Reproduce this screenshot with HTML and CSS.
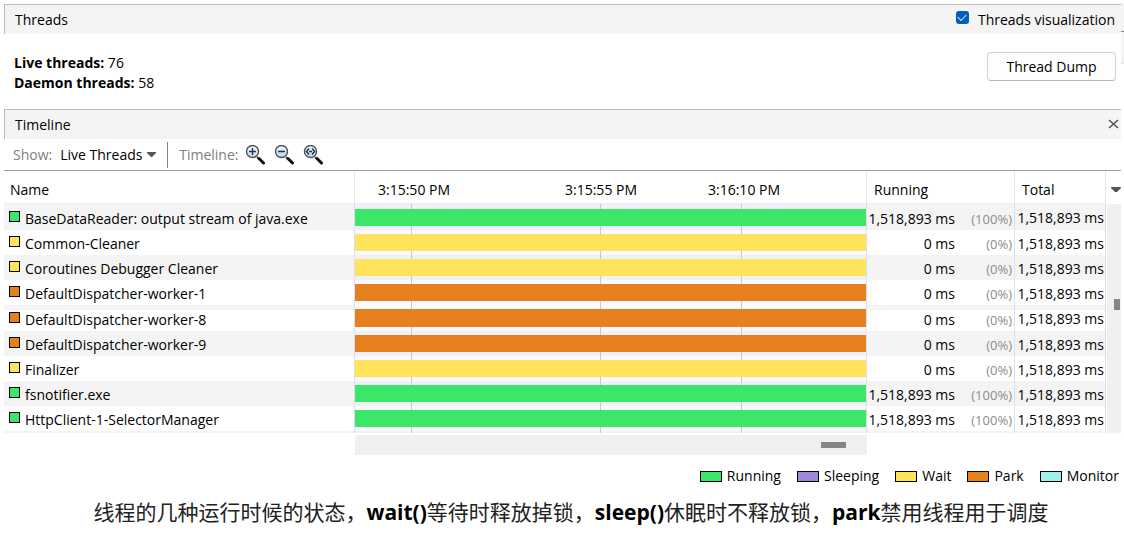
FILE: index.html
```html
<!DOCTYPE html>
<html lang="en">
<head>
<meta charset="utf-8">
<title>Threads</title>
<link rel="stylesheet" href="styles.css">
</head>
<body>
<svg class="defs" aria-hidden="true">
  <defs>
    <linearGradient id="lens-fill" x1="0" y1="0" x2="0" y2="1">
      <stop offset="0" stop-color="#fafdff"/>
      <stop offset="1" stop-color="#bcd4ea"/>
    </linearGradient>
    <symbol id="lens" viewBox="0 0 20 20">
      <path d="M12 12l2.500 2.500" stroke="#555" stroke-width="1.800"/>
      <path d="M14 13.500l4.500 4.500" stroke="#111" stroke-width="3" stroke-linecap="round"/>
      <circle cx="7.500" cy="6.500" r="6" fill="url(#lens-fill)" stroke="#4b5158" stroke-width="1.400"/>
    </symbol>
  </defs>
</svg>
<div class="window">
  <main class="panel">
    <header class="bar">
      <h2 class="bar-title">Threads</h2>
      <label class="toggle"><input class="check" type="checkbox" checked>Threads visualization</label>
    </header>
    <section class="summary">
      <div class="counts">
        <div><b>Live threads:</b> 76</div>
        <div><b>Daemon threads:</b> 58</div>
      </div>
      <button class="dump" type="button">Thread Dump</button>
    </section>
    <header class="bar">
      <h2 class="bar-title">Timeline</h2>
      <button class="close" type="button" aria-label="Close">
        <svg width="11" height="10" viewBox="0 0 11 10"><path d="M1 1l9 8M10 1L1 9" stroke="#555" stroke-width="1.600" fill="none"/></svg>
      </button>
    </header>
    <div class="toolbar">
      <label class="muted" for="show">Show:</label>
      <span class="picker">
        <select id="show"><option>Live Threads</option></select>
        <svg class="caret" width="9" height="5" viewBox="0 0 9 5"><path d="M0 0h9v1L5 5H4L0 1z" fill="#555"/></svg>
      </span>
      <span class="divider"></span>
      <span class="muted">Timeline:</span>
      <div class="tools">
        <button class="tool" type="button" aria-label="Zoom in">
          <svg width="20" height="20"><use href="#lens"/><path d="M4 6.500h7M7.500 3v7" stroke="#27364a" stroke-width="1.400"/></svg>
        </button>
        <button class="tool" type="button" aria-label="Zoom out">
          <svg width="20" height="20"><use href="#lens"/><path d="M4 6.500h7" stroke="#27364a" stroke-width="1.600"/></svg>
        </button>
        <button class="tool" type="button" aria-label="Scale to fit">
          <svg width="20" height="20"><use href="#lens"/><path d="M6 3.500L3.500 6.500L6 9.500M9 3.500L11.500 6.500L9 9.500M6 6.500h3" stroke="#27364a" stroke-width="1.500" fill="none"/></svg>
        </button>
      </div>
    </div>
    <div class="grid">
      <table class="threads">
        <colgroup><col class="col-name"><col><col class="col-running"><col class="col-total"></colgroup>
        <thead>
          <tr>
            <th>Name</th>
            <th><div class="axis"><span>3:15:50 PM</span><span>3:15:55 PM</span><span>3:16:10 PM</span></div></th>
            <th>Running</th>
            <th>Total</th>
          </tr>
        </thead>
        <tbody>
          <tr class="alt tall"><td><div class="name"><i class="dot running"></i>BaseDataReader: output stream of java.exe</div></td><td class="lane"><div class="span running"></div></td><td><div class="run"><span class="ms">1,518,893 ms</span><span class="pct">(100%)</span></div></td><td class="total">1,518,893 ms</td></tr>
          <tr><td><div class="name"><i class="dot wait"></i>Common-Cleaner</div></td><td class="lane"><div class="span wait"></div></td><td><div class="run"><span class="ms">0 ms</span><span class="pct">(0%)</span></div></td><td class="total">1,518,893 ms</td></tr>
          <tr class="alt"><td><div class="name"><i class="dot wait"></i>Coroutines Debugger Cleaner</div></td><td class="lane"><div class="span wait"></div></td><td><div class="run"><span class="ms">0 ms</span><span class="pct">(0%)</span></div></td><td class="total">1,518,893 ms</td></tr>
          <tr><td><div class="name"><i class="dot park"></i>DefaultDispatcher-worker-1</div></td><td class="lane"><div class="span park"></div></td><td><div class="run"><span class="ms">0 ms</span><span class="pct">(0%)</span></div></td><td class="total">1,518,893 ms</td></tr>
          <tr class="seam tall"><td><div class="name"><i class="dot park"></i>DefaultDispatcher-worker-8</div></td><td class="lane"><div class="span park"></div></td><td><div class="run"><span class="ms">0 ms</span><span class="pct">(0%)</span></div></td><td class="total">1,518,893 ms</td></tr>
          <tr class="alt"><td><div class="name"><i class="dot park"></i>DefaultDispatcher-worker-9</div></td><td class="lane"><div class="span park"></div></td><td><div class="run"><span class="ms">0 ms</span><span class="pct">(0%)</span></div></td><td class="total">1,518,893 ms</td></tr>
          <tr><td><div class="name"><i class="dot wait"></i>Finalizer</div></td><td class="lane"><div class="span wait"></div></td><td><div class="run"><span class="ms">0 ms</span><span class="pct">(0%)</span></div></td><td class="total">1,518,893 ms</td></tr>
          <tr class="alt"><td><div class="name"><i class="dot running"></i>fsnotifier.exe</div></td><td class="lane"><div class="span running"></div></td><td><div class="run"><span class="ms">1,518,893 ms</span><span class="pct">(100%)</span></div></td><td class="total">1,518,893 ms</td></tr>
          <tr><td><div class="name"><i class="dot running"></i>HttpClient-1-SelectorManager</div></td><td class="lane"><div class="span running"></div></td><td><div class="run"><span class="ms">1,518,893 ms</span><span class="pct">(100%)</span></div></td><td class="total">1,518,893 ms</td></tr>
          <tr class="alt next"><td></td><td class="lane"></td><td></td><td></td></tr>
        </tbody>
      </table>
      <div class="side">
        <button class="columns" type="button" aria-label="Choose columns">
          <svg width="10" height="5" viewBox="0 0 10 5"><path d="M0 0h10v1L6 5H4L0 1z" fill="#555"/></svg>
        </button>
        <div class="vscroll"><div class="vthumb"></div></div>
      </div>
    </div>
    <div class="hscroll"><div class="hthumb"></div></div>
    <ul class="legend">
      <li><i class="chip running"></i>Running</li>
      <li><i class="chip sleeping"></i>Sleeping</li>
      <li><i class="chip wait"></i>Wait</li>
      <li><i class="chip park"></i>Park</li>
      <li><i class="chip monitor"></i>Monitor</li>
    </ul>
  </main>
  <div class="edge"><div class="edge-top"></div><div class="edge-bottom"></div></div>
</div>
<p class="caption" lang="zh-CN">线程的几种运行时候的状态，<b>wait()</b>等待时释放掉锁，<b>sleep()</b>休眠时不释放锁，<b>park</b>禁用线程用于调度</p>
</body>
</html>
```
FILE: styles.css
```css
* { box-sizing: border-box; }
body {
  margin: 0;
  background: #fff;
  color: #000;
  font: 14px/20px "Open Sans", "Noto Sans", "Noto Sans CJK SC", sans-serif;
}
button, select { font: inherit; color: inherit; }
button { padding: 0; border: 0; background: none; }
svg { display: block; }
.defs { position: absolute; width: 0; height: 0; }

.window { display: flex; padding-left: 4px; }
.panel { flex: 1; min-width: 0; padding-top: 4px; }
.edge { width: 3px; padding-top: 3px; }
.edge-top { height: 29px; background: #f4f4f4; border-bottom: 1px solid #8c8c8c; }
.edge-bottom { height: 32px; background: #f4f4f4; border-bottom: 2px solid #e8e8e8; }

.bar {
  display: flex;
  align-items: center;
  justify-content: space-between;
  height: 30px;
  padding: 0 6px 0 10px;
  background: #f4f4f4;
  border-top: 1px solid #bebebe;
  border-left: 1px solid #bebebe;
}
.bar-title { margin: 0; font-size: 14px; font-weight: 400; }
.toggle { display: flex; align-items: center; gap: 9px; }
.check {
  appearance: none;
  display: grid;
  place-items: center;
  width: 13px;
  height: 13px;
  margin: 0 0 4px;
  border-radius: 3px;
  background: #005fb8;
}
.check:checked::before {
  content: "";
  width: 7px;
  height: 4px;
  margin-bottom: 2px;
  border: solid #d5e5f5;
  border-width: 0 0 1px 1px;
  transform: rotate(-45deg);
}
.close { margin-right: -6px; padding: 0 2px 2px; }

.summary {
  display: flex;
  justify-content: space-between;
  align-items: flex-start;
  padding: 18px 5px 16px 10px;
}
.counts { padding-top: 1px; }
.dump {
  width: 129px;
  height: 29px;
  padding-top: 1px;
  border: 1px solid #d0d0d0;
  border-bottom-color: #b8b8b8;
  border-radius: 4px;
  background: #fdfdfd;
}

.toolbar {
  display: flex;
  align-items: center;
  height: 32px;
  padding: 0 9px;
  border-bottom: 1px solid #a0a0a0;
}
.muted { color: #808080; }
.picker { display: flex; align-items: center; margin-left: 8px; }
.picker select {
  appearance: none;
  width: 96px;
  margin-right: -9px;
  padding: 0;
  border: 0;
  background: transparent;
}
.caret { pointer-events: none; }
.divider { width: 1px; height: 26px; margin: 0 11px 0 11px; background: #808080; }
.tools { display: flex; gap: 9px; margin-left: 7px; }
.tool { width: 20px; height: 20px; }

.grid { display: flex; }
.threads { flex: 1; min-width: 0; table-layout: fixed; border-collapse: separate; border-spacing: 0; }
.col-name { width: 351px; }
.col-running { width: 148px; }
.col-total { width: 91px; }
.threads th {
  height: 33px;
  padding: 5px 0 0 7px;
  text-align: left;
  font-weight: 400;
  border-right: 1px solid #e5e5e5;
  border-bottom: 1px solid #eee;
}
.threads th:first-child { padding-left: 6px; }
.threads th:nth-child(2) { padding-left: 0; }
.axis { display: grid; grid-template-columns: 187fr 143fr 158fr; padding-left: 23px; }
.threads td { height: 25px; padding: 0; border-right: 1px solid #d8def5; }
.alt { background: #f4f4f4; }
.threads .tall td { height: 26px; padding-top: 1px; }
.seam { background: linear-gradient(#f4f4f4 5px, #fff 5px); }
.name { display: flex; align-items: center; gap: 5px; padding: 2px 0 0 5px; white-space: nowrap; }
.dot { width: 11px; height: 11px; margin-bottom: 4px; border: 1px solid #000; }
.threads .lane {
  vertical-align: top;
  padding-top: 4px;
  background:
    linear-gradient(#c8c8d0, #c8c8d0) 11% 0 / 1px 100% no-repeat,
    linear-gradient(#c8c8d0, #c8c8d0) 48% 0 / 1px 100% no-repeat,
    linear-gradient(#c8c8d0, #c8c8d0) 75.7% 0 / 1px 100% no-repeat,
    #f9f9ff;
}
.threads .alt .lane { background-color: #f0f0f9; }
.threads .tall .lane { padding-top: 5px; }
.threads .seam .lane { padding-top: 4px; }
.span { height: 17px; }
.seam .span { height: 18px; }
.run { display: flex; align-items: center; justify-content: space-between; padding: 2px 2px 0 0; }
.ms { width: 88px; text-align: right; white-space: nowrap; }
.pct { color: #8c8c8c; font-size: 13px; }
.threads .total { padding: 2px 1px 0 0; text-align: right; white-space: nowrap; }
.threads .next td { height: 2px; padding: 0; }

.running { background: #3ce667; }
.wait { background: #ffe35a; }
.park { background: #e6801e; }
.sleeping { background: #9b87dc; }
.monitor { background: #a0f0ec; }

.side { display: flex; flex-direction: column; width: 15px; padding-left: 1px; }
.columns { display: flex; justify-content: flex-end; align-items: center; height: 33px; padding-top: 3px; }
.vscroll { flex: 1; padding: 95px 1px 0 7px; background: #f0f0f0; }
.vthumb { height: 11px; background: #868686; }
.hscroll {
  height: 20px;
  margin: 2px 254px 0 351px;
  padding: 7px 21px;
  background: #f0f0f0;
}
.hthumb { width: 25px; height: 6px; margin-left: auto; background: #868686; }
.legend {
  display: flex;
  justify-content: flex-end;
  gap: 16px;
  margin: 11px 0 0;
  padding: 0 2px 0 0;
  list-style: none;
}
.legend li { display: flex; align-items: center; gap: 5px; }
.chip { width: 22px; height: 11px; border: 1px solid #000; }
.caption {
  margin: 10px 0 0;
  padding-left: 18px;
  color: #222;
  text-align: center;
  font-size: 21px;
  line-height: 32px;
}
.caption b { color: #000; }
```
